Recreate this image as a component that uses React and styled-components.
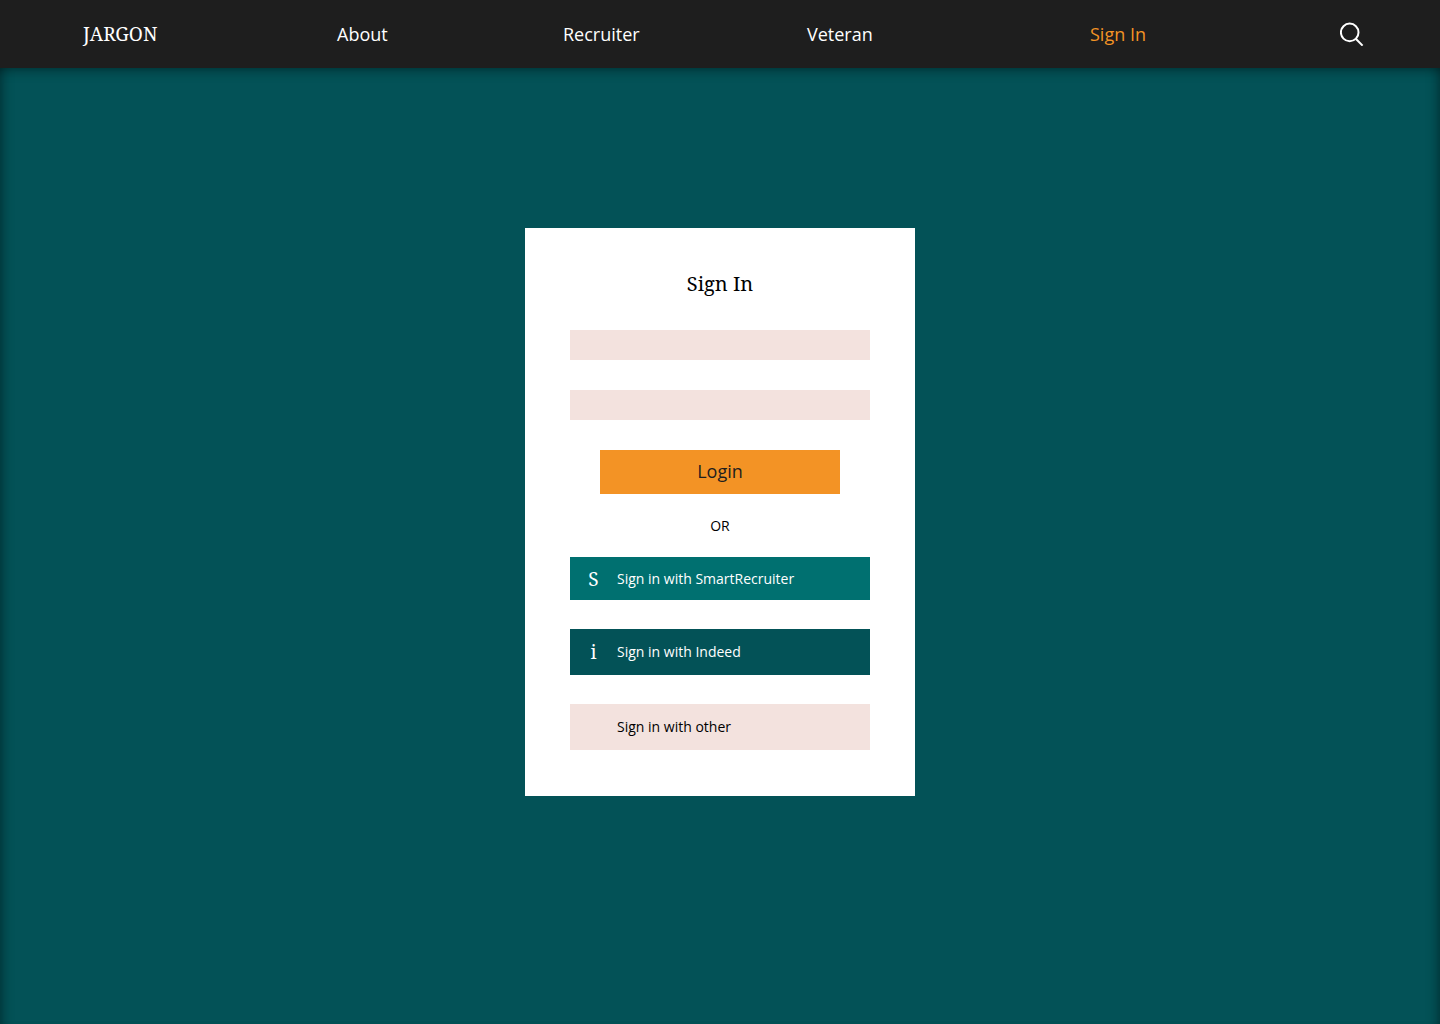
import React from "react";
import styled, { createGlobalStyle } from "styled-components";

const sans = `"Open Sans", "Noto Sans", sans-serif`;
const serif = `"Noto Serif", "DejaVu Serif Condensed", "DejaVu Serif", serif`;

const GlobalStyle = createGlobalStyle`
  *, *::before, *::after { box-sizing: border-box; }
  body { margin: 0; background: #035257; font-family: ${sans}; color: #000; }
  button, input { font: inherit; color: inherit; border: 0; border-radius: 0; }
  button { cursor: pointer; }
`;

const Page = styled.div`
  min-height: 100vh;
  display: flex;
  flex-direction: column;
`;

const Header = styled.header`
  background: #1e1e1e;
  color: #fff;
`;

const Nav = styled.nav`
  display: grid;
  grid-template-columns: 254fr 226fr 244fr 283fr 250fr auto;
  align-items: center;
  justify-items: start;
  height: 68px;
  padding: 0 76px 0 83px;
`;

const Brand = styled.a`
  font-family: ${serif};
  font-size: 19px;
  line-height: 28px;
  color: inherit;
  text-decoration: none;
`;

const NavLink = styled.a`
  font-size: 18px;
  line-height: 28px;
  color: ${(p) => (p.$active ? "#f39325" : "inherit")};
  text-decoration: none;
`;

const SearchButton = styled.button`
  display: flex;
  padding: 0;
  background: none;
`;

const Main = styled.main`
  flex: 1;
  display: flex;
  flex-direction: column;
  align-items: center;
  padding: 160px 24px 228px;
  box-shadow:
    inset 0 12px 12px -10px rgba(0, 0, 0, 0.4),
    inset 12px 0 12px -10px rgba(0, 0, 0, 0.4),
    inset -12px 0 12px -10px rgba(0, 0, 0, 0.4);
`;

const Card = styled.section`
  width: 100%;
  max-width: 390px;
  padding: 40px 45px 46px;
  background: #fff;
`;

const Title = styled.h1`
  margin: 0 0 30px;
  font-family: ${serif};
  font-size: 20px;
  font-weight: 400;
  line-height: 32px;
  text-align: center;
`;

const Form = styled.form`
  display: flex;
  flex-direction: column;
  gap: 30px;
`;

const Field = styled.input`
  width: 100%;
  height: 30px;
  padding: 0 10px;
  background: #f3e2de;
  font-size: 14px;
`;

const LoginButton = styled.button`
  align-self: center;
  width: 80%;
  height: 44px;
  padding: 0 0 2px;
  background: #f39325;
  color: #1e1e1e;
  font-size: 18px;
`;

const Divider = styled.p`
  margin: 20px 0;
  font-size: 14px;
  line-height: 23px;
  text-align: center;
`;

const Providers = styled.div`
  display: flex;
  flex-direction: column;
  gap: 29px;
`;

const themes = {
  smart: { background: "#007070", color: "#fff", height: 43 },
  indeed: { background: "#035257", color: "#fff", height: 46 },
  other: { background: "#f3e2de", color: "#000", height: 46 },
};

const ProviderButton = styled.button`
  display: grid;
  grid-template-columns: 47px 1fr;
  align-items: center;
  width: 100%;
  height: ${(p) => themes[p.$theme].height}px;
  padding: 0;
  background: ${(p) => themes[p.$theme].background};
  color: ${(p) => themes[p.$theme].color};
  font-size: 14px;
  line-height: 20px;
  text-align: left;
`;

const Monogram = styled.span`
  font-family: ${serif};
  font-size: 19px;
  text-align: center;
`;

export default function App() {
  return (
    <Page>
      <GlobalStyle />
      <Header>
        <Nav aria-label="Main">
          <Brand href="#home">JARGON</Brand>
          <NavLink href="#about">About</NavLink>
          <NavLink href="#recruiter">Recruiter</NavLink>
          <NavLink href="#veteran">Veteran</NavLink>
          <NavLink href="#sign-in" $active aria-current="page">Sign In</NavLink>
          <SearchButton type="button" aria-label="Search">
            <svg width="24" height="24" viewBox="0 0 24 24" fill="none" stroke="#fff" strokeWidth="2">
              <circle cx="9.7" cy="10.4" r="8.8" />
              <path d="M15.8 16.8L22.6 23.6" />
            </svg>
          </SearchButton>
        </Nav>
      </Header>
      <Main>
        <Card aria-labelledby="sign-in-title">
          <Title id="sign-in-title">Sign In</Title>
          <Form onSubmit={(e) => e.preventDefault()}>
            <Field type="text" name="username" aria-label="Username" autoComplete="username" />
            <Field type="password" name="password" aria-label="Password" autoComplete="current-password" />
            <LoginButton type="submit">Login</LoginButton>
          </Form>
          <Divider>OR</Divider>
          <Providers>
            <ProviderButton type="button" $theme="smart">
              <Monogram aria-hidden="true">S</Monogram>
              <span>Sign in with SmartRecruiter</span>
            </ProviderButton>
            <ProviderButton type="button" $theme="indeed">
              <Monogram aria-hidden="true">i</Monogram>
              <span>Sign in with Indeed</span>
            </ProviderButton>
            <ProviderButton type="button" $theme="other">
              <Monogram aria-hidden="true" />
              <span>Sign in with other</span>
            </ProviderButton>
          </Providers>
        </Card>
      </Main>
    </Page>
  );
}
